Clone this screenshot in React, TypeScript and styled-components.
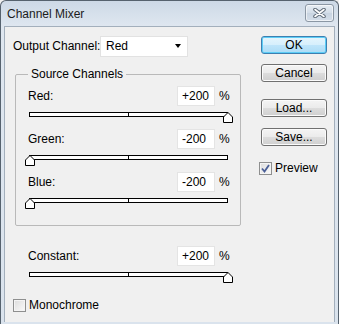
import styled, { createGlobalStyle } from "styled-components";

const GlobalStyle = createGlobalStyle`
  html, body {
    margin: 0;
    padding: 0;
    background: #f0f0f0;
  }
  body {
    font-family: "Liberation Sans", Arial, sans-serif;
    font-size: 12px;
    color: #000;
  }
  * {
    box-sizing: border-box;
  }
`;

const Window = styled.div`
  width: 339px;
  height: 324px;
  display: flex;
  flex-direction: column;
  padding: 0 3px 2px 3px;
  background: linear-gradient(#cdd9e6, #dfe7f0 26px, #dae3ed);
  border: 1px solid #56626e;
  border-bottom: none;
  border-radius: 6px 6px 0 0;
`;

const TitleBar = styled.div`
  height: 25px;
  display: flex;
  align-items: center;
  justify-content: space-between;
  padding-left: 3px;
`;

const Title = styled.span`
  font-size: 12px;
  color: #1b1b1b;
`;

const CloseButton = styled.div`
  align-self: flex-start;
  margin-top: 3px;
  margin-right: 1px;
  width: 29px;
  height: 18px;
  display: flex;
  align-items: center;
  justify-content: center;
  border: 1px solid #8b97a4;
  border-radius: 3px;
  background: linear-gradient(#e6edf4, #d3dde8 50%, #c8d4e1 50%, #d4dee9);
  box-shadow: inset 0 0 0 1px rgba(255, 255, 255, 0.6);
`;

const Body = styled.div`
  flex: 1;
  display: flex;
  padding: 9px 7px 0 8px;
  background: #f0f0f0;
  border: 1px solid #a3afbc;
  border-bottom: none;
`;

const LeftColumn = styled.div`
  width: 234px;
  display: flex;
  flex-direction: column;
`;

const RightColumn = styled.div`
  margin-left: auto;
  width: 66px;
  display: flex;
  flex-direction: column;
`;

const OutputRow = styled.div`
  height: 20px;
  display: flex;
  align-items: center;
`;

const OutputLabel = styled.span`
  width: 87px;
  flex-shrink: 0;
  white-space: nowrap;
`;

const Select = styled.div`
  width: 88px;
  height: 21px;
  flex-shrink: 0;
  display: flex;
  align-items: center;
  justify-content: space-between;
  padding: 0 6px 0 5px;
  background: #fff;
  border: 1px solid #e2e2e2;
`;

const Arrow = styled.span`
  width: 0;
  height: 0;
  border-left: 3.5px solid transparent;
  border-right: 3.5px solid transparent;
  border-top: 4px solid #000;
`;

const GroupBox = styled.fieldset`
  margin: 11px 0 0 2px;
  width: 226px;
  padding: 5px 12px 22px 12px;
  border: 1px solid #b9b9b9;
  border-radius: 2px;
  display: flex;
  flex-direction: column;
  gap: 12px;
`;

const Legend = styled.legend`
  padding: 0 3px;
  line-height: 14px;
`;

const Block = styled.div<{ $indent?: number; $top?: number }>`
  display: flex;
  flex-direction: column;
  width: 200px;
  margin-left: ${(p) => p.$indent ?? 0}px;
  margin-top: ${(p) => p.$top ?? 0}px;
`;

const ValueRow = styled.div`
  height: 20px;
  display: flex;
  align-items: center;
`;

const ValueLabel = styled.span`
  flex: 1;
`;

const ValueInput = styled.div`
  width: 38px;
  height: 20px;
  display: flex;
  align-items: center;
  padding-left: 4px;
  background: #fff;
  border: 1px solid #e4e4e4;
`;

const Percent = styled.span`
  margin-left: 4px;
  width: 9px;
`;

const Track = styled.div`
  position: relative;
  margin: 6px 0 0 1px;
  width: 199px;
  height: 5px;
  background: #fff;
  border: 1px solid #000;
`;

const CenterTick = styled.div`
  position: absolute;
  left: 98px;
  top: 0;
  width: 1px;
  height: 100%;
  background: #000;
`;

const Thumb = styled.svg`
  position: absolute;
  top: -1px;
  margin-left: -5px;
  width: 10px;
  height: 11px;
`;

const Button = styled.div<{ $primary?: boolean; $top: number }>`
  margin-top: ${(p) => p.$top}px;
  height: 18px;
  display: flex;
  align-items: center;
  justify-content: center;
  border: 1px solid ${(p) => (p.$primary ? "#3c7fb1" : "#707070")};
  border-radius: 3px;
  background: ${(p) =>
    p.$primary
      ? "linear-gradient(#e5f5fd, #d6effc 50%, #bfe5fa 50%, #acdcf6)"
      : "linear-gradient(#f4f4f4, #ebebeb 50%, #dddddd 50%, #cfcfcf)"};
  box-shadow: inset 0 0 0 1px ${(p) => (p.$primary ? "#5ccdf6" : "#fbfbfb")};
`;

const CheckRow = styled.div<{ $top: number; $shift?: number }>`
  margin-top: ${(p) => p.$top}px;
  margin-left: ${(p) => p.$shift ?? 0}px;
  display: flex;
  align-items: center;
  gap: 3px;
`;

const CheckBox = styled.div`
  width: 13px;
  height: 13px;
  display: flex;
  align-items: center;
  justify-content: center;
  border: 1px solid #8e8f8f;
  background: linear-gradient(135deg, #dcdcdc, #fafafa);
  box-shadow: inset 0 0 0 1px #f4f4f4;
`;

type SliderProps = {
  label: string;
  value: number;
  indent?: number;
  top?: number;
};

const ThumbShape = () => (
  <path d="M5 0.5 L9.5 5 L9.5 10.5 L0.5 10.5 L0.5 5 Z" fill="#fff" stroke="#000" strokeWidth="1" />
);

const Slider = ({ label, value, indent, top }: SliderProps) => {
  const pos = ((value + 200) / 400) * 198;
  return (
    <Block $indent={indent} $top={top}>
      <ValueRow>
        <ValueLabel>{label}</ValueLabel>
        <ValueInput>{value > 0 ? `+${value}` : value}</ValueInput>
        <Percent>%</Percent>
      </ValueRow>
      <Track>
        <CenterTick />
        <Thumb viewBox="0 0 10 11" style={{ left: pos }}>
          <ThumbShape />
        </Thumb>
      </Track>
    </Block>
  );
};

export default function App() {
  return (
    <>
      <GlobalStyle />
      <Window>
        <TitleBar>
          <Title>Channel Mixer</Title>
          <CloseButton>
            <svg width="13" height="10" viewBox="0 0 13 10">
              <path d="M2 1.5 L11 8.5 M11 1.5 L2 8.5" stroke="#5f6b78" strokeWidth="3.6" strokeLinecap="round" />
              <path d="M2 1.5 L11 8.5 M11 1.5 L2 8.5" stroke="#fff" strokeWidth="1.6" strokeLinecap="round" />
            </svg>
          </CloseButton>
        </TitleBar>
        <Body>
          <LeftColumn>
            <OutputRow>
              <OutputLabel>Output Channel:</OutputLabel>
              <Select>
                Red
                <Arrow />
              </Select>
            </OutputRow>
            <GroupBox>
              <Legend>Source Channels</Legend>
              <Slider label="Red:" value={200} />
              <Slider label="Green:" value={-200} />
              <Slider label="Blue:" value={-200} />
            </GroupBox>
            <Slider label="Constant:" value={200} indent={15} top={20} />
            <CheckRow $top={21}>
              <CheckBox />
              Monochrome
            </CheckRow>
          </LeftColumn>
          <RightColumn>
            <Button $primary $top={0}>OK</Button>
            <Button $top={10}>Cancel</Button>
            <Button $top={17}>Load...</Button>
            <Button $top={11}>Save...</Button>
            <CheckRow $top={15} $shift={-2}>
              <CheckBox>
                <svg width="9" height="9" viewBox="0 0 9 9">
                  <path d="M1 4.5 L3.5 7.5 L8 1" fill="none" stroke="#4a5f97" strokeWidth="1.8" />
                </svg>
              </CheckBox>
              Preview
            </CheckRow>
          </RightColumn>
        </Body>
      </Window>
    </>
  );
}
